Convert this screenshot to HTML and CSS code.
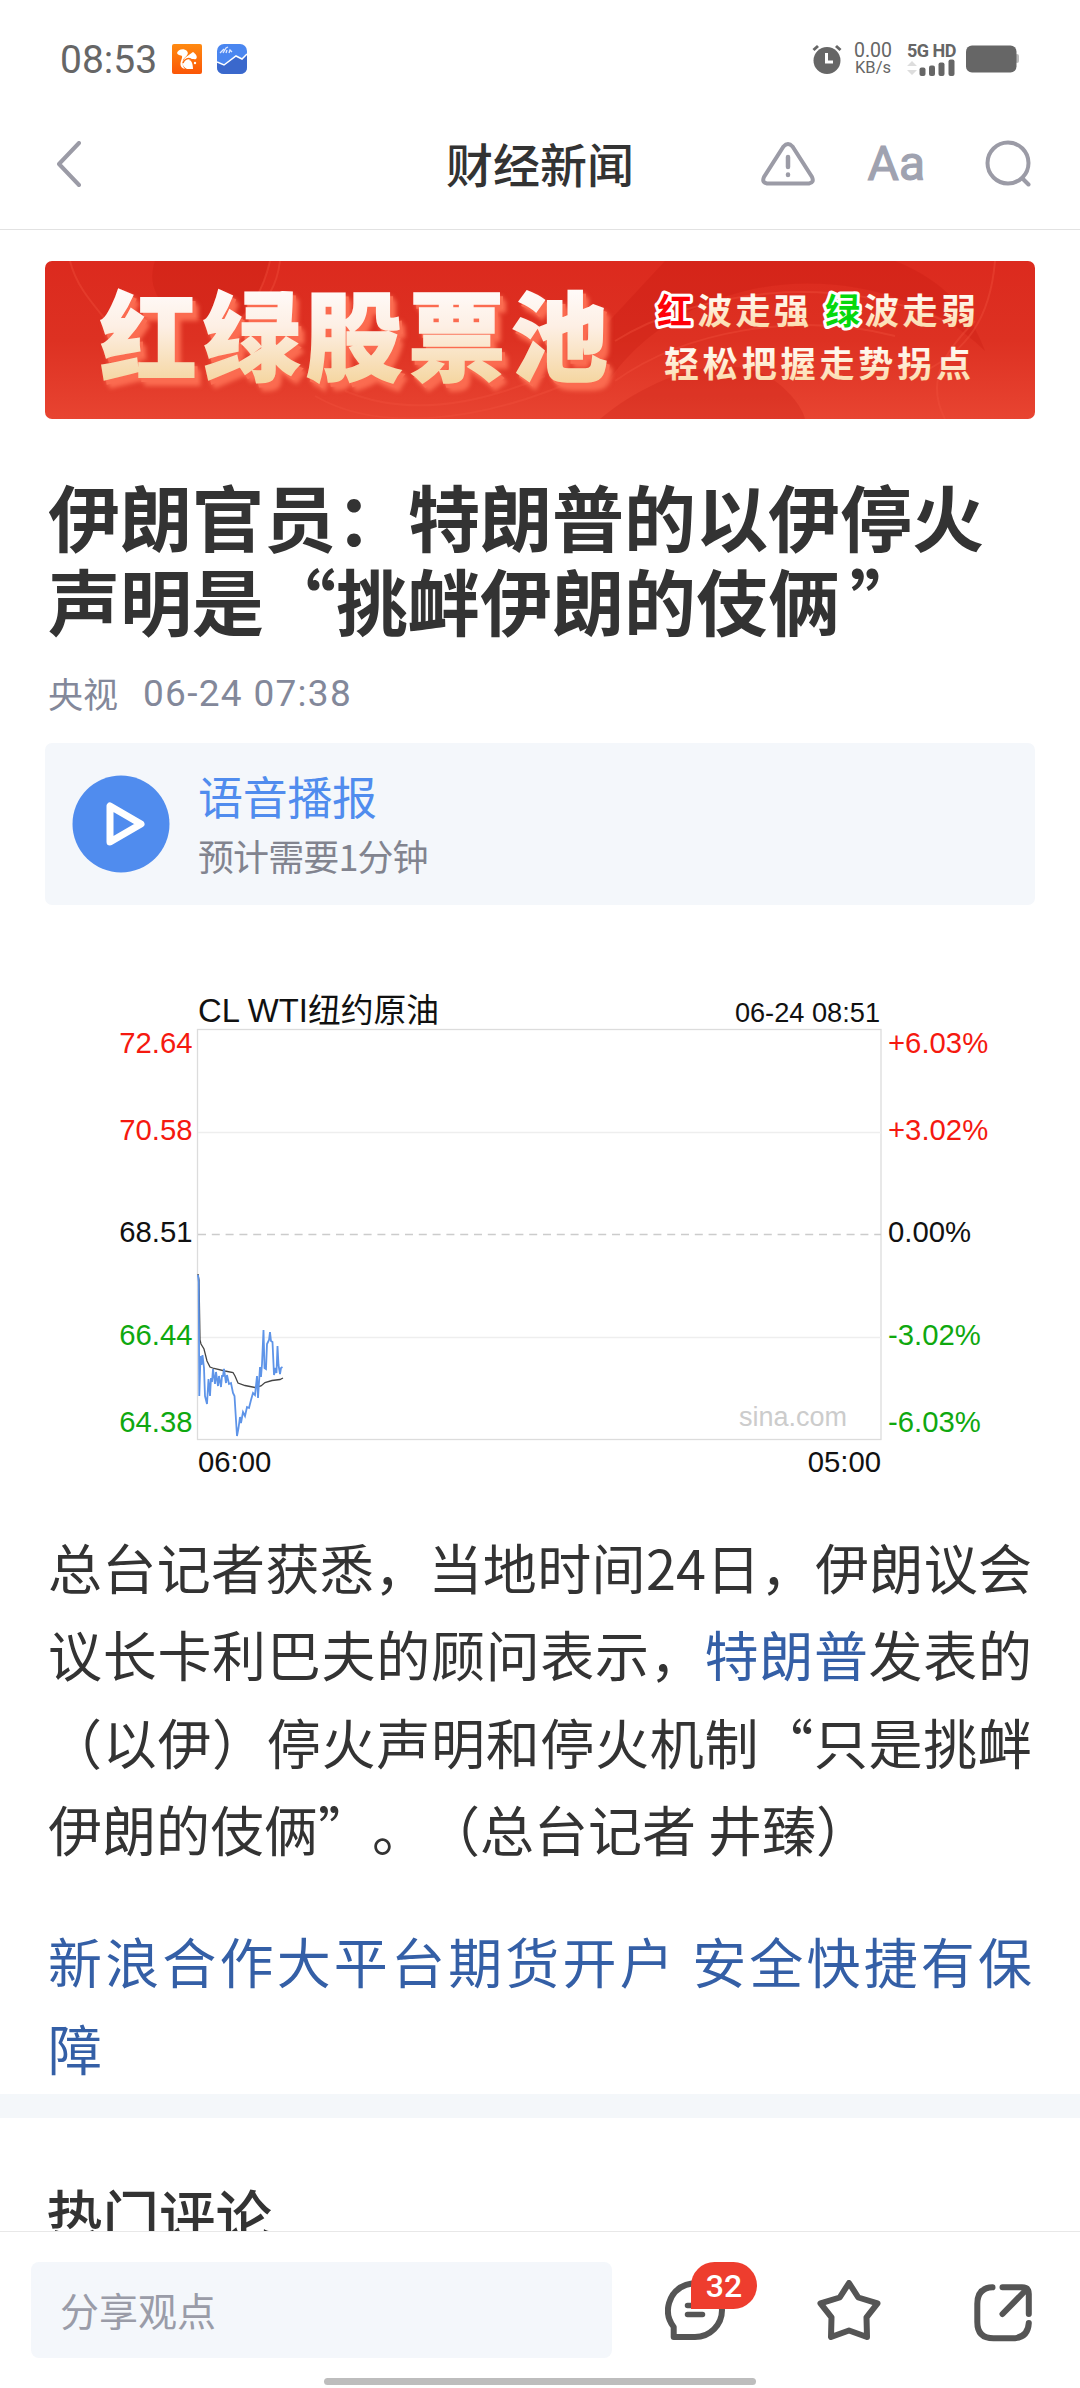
FILE: index.html
```html
<!DOCTYPE html>
<html lang="zh-CN">
<head>
	<meta charset="utf-8">
	<title>财经新闻</title>
	<link rel="stylesheet" href="styles.css">
</head>
<body>
	<div class="status">
		<span class="time">08:53</span>
		<svg class="app-icon" width="30" height="30" viewBox="0 0 30 30">
			<defs>
				<linearGradient id="uc" x1="0" y1="0" x2="0" y2="1">
					<stop offset="0" stop-color="#ff8a10"/>
					<stop offset="1" stop-color="#fb5607"/>
				</linearGradient>
			</defs>
			<rect width="30" height="30" rx="2" fill="url(#uc)"/>
			<path d="M5 9C6 5 12 4 15 7C18 11 12 13 11 16C10 20 11 23 13 25C8 24 8 20 9 17C10 14 11 12 9 11.5C7 11 6 11 5 9Z" fill="#fff"/>
			<path d="M14 13L21 8C24 10 26 13 24 15C22 16 20 14 17 16C19 16 21 19 21 25H15C10 23 9 17 14 13Z" fill="#fff"/>
			<path d="M11 19C12 15 17 13 20 16" fill="none" stroke="#fb6b0b" stroke-width="1.4"/>
			<circle cx="23" cy="19" r="1.2" fill="#fff"/>
		</svg>
		<svg class="app-icon" width="30" height="30" viewBox="0 0 30 30">
			<rect width="30" height="30" rx="7" fill="#4a86f0"/>
			<path d="M0 18L7 21L19 12L25 15L30 10V23Q30 30 23 30H7Q0 30 0 23Z" fill="#3a68cc"/>
			<path d="M0 18L7 21L19 12L25 15L30 10" fill="none" stroke="#fff" stroke-width="1.5"/>
			<path d="M3 9L7 5M6 9L9 4L11 3M9 9L10 6M12 9L13 6L15 8" fill="none" stroke="#dfe9ff" stroke-width="1.3"/>
		</svg>
		<div class="status-right">
			<svg width="30" height="30" viewBox="0 0 30 30">
				<circle cx="15" cy="16.5" r="13.5" fill="#666"/>
				<path d="M1.5 6L6 2M28.5 6L24 2" stroke="#666" stroke-width="3"/>
				<path d="M14.5 9V18H21" fill="none" stroke="#fff" stroke-width="3"/>
			</svg>
			<div class="speed"><span>0.00</span><small>KB/s</small></div>
			<div class="signal">
				<b>5G HD</b>
				<svg width="48" height="17" viewBox="0 0 48 17">
					<path d="M0 7L5 2L10 7ZM0 11L5 16L10 11Z" fill="#ddd"/>
					<g fill="#666">
						<rect x="12.5" y="8.5" width="6" height="8.5" rx="2"/>
						<rect x="22" y="6.5" width="6" height="10.5" rx="2"/>
						<rect x="31.5" y="3.5" width="6" height="13.5" rx="2"/>
						<rect x="41.5" y="0.5" width="6" height="16.5" rx="2"/>
					</g>
				</svg>
			</div>
			<svg width="54" height="28" viewBox="0 0 54 28">
				<rect x="49" y="9" width="4" height="9" rx="2" fill="#bbb"/>
				<rect width="50.5" height="27" rx="6" y="0.5" fill="#666"/>
			</svg>
		</div>
	</div>

	<div class="nav">
		<svg class="back" width="24" height="46" viewBox="0 0 24 46">
			<path d="M22 2L2 23L22 44" fill="none" stroke="#9b9ba6" stroke-width="4" stroke-linecap="round" stroke-linejoin="round"/>
		</svg>
		<h1>财经新闻</h1>
		<div class="tools">
			<svg width="54" height="44" viewBox="0 0 54 44" fill="none" stroke="#9b9ba6" stroke-linecap="round">
				<path d="M22.5 4.5Q27 -0.5 31.5 4.5L51 35Q53.5 40.5 48 41.5H6Q0.5 40.5 3 35Z" stroke-width="4"/>
				<path d="M27 15V25M27 32.5V33" stroke-width="4.5"/>
			</svg>
			<span class="aa">Aa</span>
			<svg width="46" height="47" viewBox="0 0 46 47" fill="none" stroke="#9b9ba6" stroke-width="4" stroke-linecap="round">
				<circle cx="23" cy="23" r="20.5"/>
				<path d="M38 39L43.5 44.5"/>
			</svg>
		</div>
	</div>

	<div class="page">
		<svg class="banner" width="990" height="158" viewBox="0 0 990 158">
			<defs>
				<linearGradient id="red" x1="0" y1="0" x2="0" y2="1">
					<stop offset="0" stop-color="#dc2a1e"/>
					<stop offset="0.5" stop-color="#dd3122"/>
					<stop offset="1" stop-color="#e84431"/>
				</linearGradient>
				<linearGradient id="gold" gradientUnits="userSpaceOnUse" x1="0" y1="30" x2="0" y2="120">
					<stop offset="0" stop-color="#fffaf8"/>
					<stop offset="0.4" stop-color="#fdefe4"/>
					<stop offset="1" stop-color="#f5d7a3"/>
				</linearGradient>
				<linearGradient id="gold1" x1="0" y1="0" x2="0" y2="1">
					<stop offset="0.3" stop-color="#fff8ee"/>
					<stop offset="1" stop-color="#fbd6a0"/>
				</linearGradient>
			</defs>
			<rect width="990" height="158" fill="url(#red)"/>
			<g fill="#b90f08" opacity="0.18">
				<path d="M110 0H225C220 25 205 45 190 62L130 55C105 35 105 15 110 0Z"/>
				<path d="M620 0H850C900 20 925 50 940 90C880 30 780 10 700 30C620 50 580 95 560 125L555 70Z"/>
				<path d="M555 158C600 120 680 85 730 120C750 135 758 150 760 158Z"/>
			</g>
			<g fill="none" stroke="#f0503c" stroke-width="2" opacity="0.4">
				<path d="M225 0C218 30 205 50 190 65M235 0C232 25 222 40 205 55"/>
				<path d="M25 0C35 40 70 60 80 90M270 135C330 170 430 165 540 115M300 130C360 155 430 145 500 115"/>
				<path d="M570 80C650 30 790 10 900 60M570 120C640 70 750 50 850 75M900 158C880 120 900 90 930 60M950 0C945 60 920 90 880 110"/>
			</g>
			<text class="big" x="55" y="112" textLength="508" fill="url(#gold)" stroke="url(#gold)">红绿股票池</text>
			<g class="slogan">
				<text class="outlined" x="612" y="63" fill="#ff0008">红</text>
				<text x="652" y="63" textLength="112" fill="url(#gold1)">波走强</text>
				<text class="outlined" x="780" y="63" fill="#06d80c">绿</text>
				<text x="819" y="63" textLength="112" fill="url(#gold1)">波走弱</text>
				<text x="619" y="116" textLength="307" fill="url(#gold1)">轻松把握走势拐点</text>
			</g>
		</svg>

		<h2 class="title">伊朗官员：特朗普的以伊停火<br>声明是“挑衅伊朗的伎俩<span class="close-quote">”</span></h2>
		<div class="meta"><span>央视</span><span class="date">06-24 07:38</span></div>

		<div class="audio">
			<svg width="98" height="98" viewBox="0 0 98 98">
				<circle cx="49" cy="49" r="48.5" fill="#508cee"/>
				<path d="M38 31V67L69 49Z" fill="none" stroke="#fff" stroke-width="7" stroke-linejoin="round"/>
			</svg>
			<div>
				<div class="audio-title">语音播报</div>
				<div class="audio-sub">预计需要1分钟</div>
			</div>
		</div>

		<svg class="chart" width="920" height="510" viewBox="0 0 920 510">
			<rect x="97.5" y="49.5" width="683.5" height="410" fill="none" stroke="#dcdcdc" stroke-width="1.3"/>
			<path d="M98 152.500H781M98 357.500H781" stroke="#eee" stroke-width="1.3"/>
			<path d="M98 254.500H781" stroke="#ccc" stroke-width="1.5" stroke-dasharray="8 5.8"/>

			<text x="98" y="41.5" font-size="32.8">CL WTI纽约原油</text>
			<text x="780" y="41.5" font-size="27.2" text-anchor="end">06-24 08:51</text>
			<text x="639" y="446" font-size="27" fill="#ccc">sina.com</text>

			<g font-size="29.3">
				<g text-anchor="end">
					<text x="92.5" y="72.5" fill="#f5190f">72.64</text>
					<text x="92.5" y="159.5" fill="#f5190f">70.58</text>
					<text x="92.5" y="262">68.51</text>
					<text x="92.5" y="364.5" fill="#0fa80f">66.44</text>
					<text x="92.5" y="451.5" fill="#0fa80f">64.38</text>
				</g>
				<text x="788" y="72.5" fill="#f5190f">+6.03%</text>
				<text x="788" y="159.5" fill="#f5190f">+3.02%</text>
				<text x="788" y="262">0.00%</text>
				<text x="788" y="364.5" fill="#0fa80f">-3.02%</text>
				<text x="788" y="451.5" fill="#0fa80f">-6.03%</text>
				<text x="98" y="492">06:00</text>
				<text x="781" y="492" text-anchor="end">05:00</text>
			</g>

			<polyline fill="none" stroke="#444" stroke-width="1.3" points="98,294 99,300 100,360 101,364 104,369 107,381 110,387 114,388.5 125,391 133,392.5 135,396 138,403 145,405.5 155,407.5 161,406 165,402.5 172,400.5 180,399.5 183,398"/>
			<polyline fill="none" stroke="#5e94e8" stroke-width="1.8" points="98,295 98.7,302 99.3,416 100.5,376 101.5,385 102.5,375 104,388 105,416 107,424 108.5,399 110,416 111,398 112,402 113,389 115,404 116,392 118,406 119,396 121,407 122,396 123,396 124,389 126,403 127,395 129,404 131,403 133,413 134.5,416 136,440 137,456 138.5,448 140,437 141,443 143,432 145,436 147,427 149,428 151,420 153,413 155,415 157,396 158,418 160,387 161,397 162,384 163.5,350 164.5,388 166,389 167,364 168,362 169,360 170,352 171,361 172.5,362 174,395 175.5,388 176.5,393 177.5,366 178.5,385 180,394 181,388 182.5,387"/>
		</svg>

		<div class="article">
			<p>
				<span class="line">总台记者获悉，当地时间24日，伊朗议会</span>
				<span class="line">议长卡利巴夫的顾问表示，<a>特朗普</a>发表的</span>
				<span class="line">（以伊）停火声明和停火机制“只是挑衅</span>
				<span class="line last">伊朗的伎俩”。（总台记者 井臻）</span>
			</p>
			<p>
				<a class="line">新浪合作大平台期货开户 安全快捷有保</a>
				<a class="line last">障</a>
			</p>
		</div>

		<div class="band"></div>
		<h3 class="comments">热门评论</h3>
	</div>

	<div class="footer">
		<div class="bar">
			<div class="input">分享观点</div>
			<div class="comment">
				<svg width="60" height="60" viewBox="0 0 60 60" fill="none" stroke="#555" stroke-width="6" stroke-linecap="round" stroke-linejoin="round">
					<path d="M57 30A27 27 0 1 0 8.7 47V57H30A27 27 0 0 0 57 30Z"/>
					<path d="M22.5 25.5H38M22.5 34.5H37.5" stroke-width="5.5"/>
				</svg>
				<span class="badge">32</span>
			</div>
			<svg class="star" width="64" height="60" viewBox="0 0 64 60" fill="none" stroke="#555" stroke-width="6" stroke-linejoin="round">
				<path d="M32 3L41.3 17.5L60.5 23.3L49.5 37.3L50 57L32 50.5L14 57L14.5 37.3L3.5 23.3L22.7 17.5Z"/>
			</svg>
			<svg class="share" width="58" height="58" viewBox="0 0 58 58" fill="none" stroke="#555" stroke-width="6" stroke-linecap="round" stroke-linejoin="round">
				<path d="M18.5 3.3Q3.3 4 3.3 20V38Q3.3 54.3 19.5 54.3H38Q54 54.3 54.8 39"/>
				<path d="M28.5 3.3H48Q54.8 3.3 54.8 10V30M51 7L28.5 30"/>
			</svg>
		</div>
		<div class="home"></div>
	</div>
</body>
</html>
```

FILE: styles.css
```css
body {
	margin: 0;
	width: 1080px;
	height: 2388px;
	display: flex;
	flex-direction: column;
	overflow: hidden;
	background: #fff;
	color: #333;
	font-family: "Noto Sans CJK SC", sans-serif;
	text-spacing-trim: space-all;
}
h1, h2, h3, p {
	margin: 0;
}
svg {
	display: block;
	flex: none;
}

/* status bar */
.status {
	display: flex;
	align-items: center;
	height: 118px;
	padding: 0 60px 0 60px;
	font-family: Roboto, sans-serif;
	color: #666;
}
.time {
	width: 97px;
	margin-right: 15px;
	padding-top: 1px;
	font-size: 39px;
}
.app-icon {
	margin-right: 15px;
}
.status-right {
	display: flex;
	align-items: center;
	margin-left: auto;
}
.speed {
	display: flex;
	flex-direction: column;
	align-items: center;
	width: 40px;
	margin: 0 14px 0 11px;
	font-size: 19.5px;
	line-height: 17px;
}
.speed small {
	font-size: 16.5px;
}
.signal {
	width: 49px;
	margin-right: 10px;
}
.signal b {
	display: block;
	font-size: 18px;
	line-height: 17px;
	letter-spacing: -0.5px;
	white-space: nowrap;
}

/* title bar */
.nav {
	display: grid;
	grid-template-columns: 1fr auto 1fr;
	align-items: center;
	height: 111px;
	padding: 0 49px;
	border-bottom: 1px solid #e2e2e2;
}
.nav .back {
	margin: -20px 0 0 8px;
}
.nav h1 {
	margin-top: -22px;
	font-size: 47px;
	font-weight: 500;
	line-height: 60px;
}
.tools {
	display: flex;
	align-items: center;
	justify-content: flex-end;
	margin-top: -20px;
}
.aa {
	margin: 0 60px 0 53px;
	font: 48px/48px Roboto, sans-serif;
	-webkit-text-stroke: 1.2px #9fa2b0;
	color: #9fa2b0;
}

/* scrolling content */
.page {
	flex: 1;
	min-height: 0;
	overflow: hidden;
}
.banner {
	margin: 31px 45px 0;
	border-radius: 7px;
}
.big {
	font-size: 97px;
	font-weight: 900;
	stroke-width: 1.5px;
	filter: drop-shadow(3px 4px 0 #fb6b50) drop-shadow(3px 4px 2px #fb6b50);
}
.slogan {
	font-size: 35px;
	font-weight: 700;
}
.outlined {
	stroke: #fff;
	stroke-width: 6px;
	stroke-linejoin: round;
	paint-order: stroke;
}
.title {
	margin: 54px 48px 0;
	font-size: 72px;
	font-weight: 700;
	line-height: 84px;
}
.close-quote {
	margin-left: 10px;
}
.meta {
	display: flex;
	align-items: center;
	gap: 25px;
	margin: 24px 48px 0;
	height: 56px;
	font-size: 35px;
	line-height: 50px;
	color: #83889a;
}
.date {
	font: 37px Roboto, sans-serif;
	letter-spacing: 1.3px;
}
.audio {
	display: flex;
	align-items: center;
	gap: 28px;
	box-sizing: border-box;
	height: 162px;
	margin: 22px 45px 0;
	padding-left: 27px;
	border-radius: 7px;
	background: #f4f7fb;
}
.audio-title {
	font-size: 45px;
	line-height: 62px;
	letter-spacing: -0.3px;
	color: #508cee;
}
.audio-sub {
	font-size: 36px;
	line-height: 56px;
	letter-spacing: -0.9px;
	color: #82848f;
}
.chart {
	margin: 75px 0 0 100px;
	font-family: "Liberation Sans", "Noto Sans CJK SC", sans-serif;
	fill: #111;
}
.article {
	margin: 33px 48px 0;
	font-size: 54px;
	line-height: 87.3px;
}
.article p {
	margin-bottom: 45px;
}
.article a {
	color: #345fa6;
}
.article .line {
	display: block;
	white-space: nowrap;
	text-align: justify;
	text-align-last: justify;
}
.article .last {
	text-align-last: left;
}
.band {
	height: 24px;
	margin-top: -43px;
	background: #f4f7fa;
}
.comments {
	margin: 53px 0 0 46px;
	font-size: 56.5px;
	font-weight: 500;
	line-height: 84px;
}

/* bottom bar */
.footer {
	position: relative;
	box-sizing: border-box;
	height: 157px;
	padding: 30px 48px 0 31px;
	border-top: 1px solid #e8e8e8;
	background: #fff;
}
.bar {
	display: flex;
	align-items: center;
	height: 96px;
}
.input {
	box-sizing: border-box;
	width: 581px;
	height: 96px;
	margin-right: 53px;
	padding-left: 29px;
	border-radius: 8px;
	background: #f4f7fb;
	font-size: 39px;
	line-height: 94px;
	color: #9a9ca8;
}
.comment {
	position: relative;
}
.badge {
	position: absolute;
	left: 26px;
	top: -18px;
	width: 66px;
	height: 47px;
	border-radius: 24px 24px 24px 0;
	background: #ee3d2e;
	color: #fff;
	font: 500 32px/49px Roboto, sans-serif;
	text-align: center;
}
.star {
	margin: 0 93px 0 92px;
}
.share {
	margin-top: 6px;
}
.home {
	width: 432px;
	height: 7px;
	margin: 20px 0 0 293px;
	border-radius: 4px;
	background: #bdbdbd;
}
```
